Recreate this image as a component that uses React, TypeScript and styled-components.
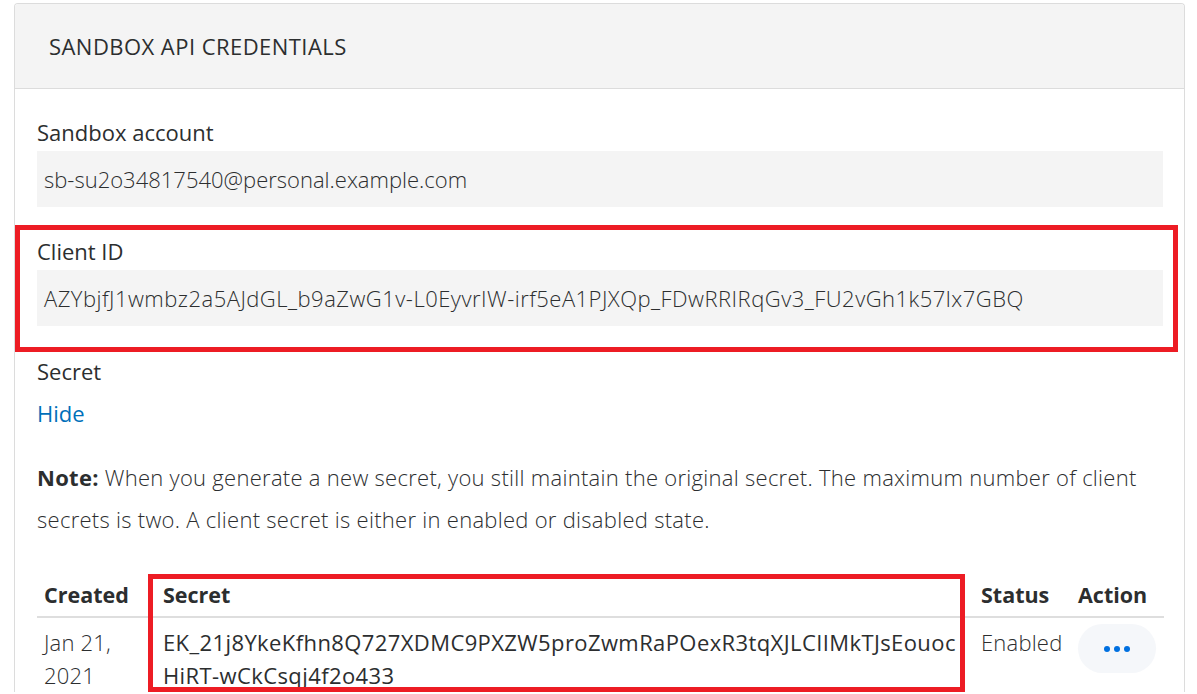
import React from 'react'
import styled, { createGlobalStyle } from 'styled-components'

const GlobalStyle = createGlobalStyle`
  html, body {
    margin: 0;
    padding: 0;
    background: #ffffff;
  }
  body {
    font-family: "Open Sans", "Noto Sans", Arial, sans-serif;
    color: #2c2e2f;
  }
`

const Page = styled.div`
  padding: 3px 12px 0 14px;
`

const Card = styled.section`
  border: 1px solid #dcdcdc;
  border-bottom: none;
  border-radius: 4px 4px 0 0;
  overflow: hidden;
`

const CardHeader = styled.header`
  height: 84px;
  display: flex;
  align-items: center;
  padding-left: 34px;
  background: #f4f4f4;
  border-bottom: 1px solid #dcdcdc;
  font-size: 22px;
  letter-spacing: 0.45px;
  color: #2c2e2f;
`

const CardBody = styled.div`
  padding: 29px 21px 0 22px;
  display: flex;
  flex-direction: column;
`

const Field = styled.div`
  display: flex;
  flex-direction: column;
`

const Highlight = styled.div`
  margin: 18px -15px 0 -22px;
  padding: 7px 10px 21px 17px;
  border: 5px solid #ed1c24;
`

const Label = styled.div`
  font-size: 22px;
  line-height: 28px;
  color: #2c2e2f;
  margin-bottom: 5px;
`

const ValueBox = styled.div<{ $spacing?: number }>`
  height: 56px;
  display: flex;
  align-items: center;
  padding-left: 7px;
  background: #f4f4f4;
  font-size: 22px;
  font-weight: 300;
  letter-spacing: ${(p) => p.$spacing ?? 0}px;
  color: #2c2e2f;
  white-space: nowrap;
`

const SecretField = styled(Field)`
  margin-top: 5px;
`

const LinkButton = styled.a`
  margin-top: 9px;
  font-size: 22px;
  line-height: 28px;
  color: #0070ba;
  text-decoration: none;
  cursor: pointer;
`

const Note = styled.p`
  margin: 29px 0 0;
  font-size: 22px;
  font-weight: 300;
  line-height: 42px;
  letter-spacing: 0.28px;
  color: #2c2e2f;

  strong {
    font-weight: 700;
  }
`

const Table = styled.div`
  margin-top: 37px;
  display: grid;
  grid-template-columns: 119px 809px 106px 93px;
  grid-template-rows: auto auto;
`

const HeadCell = styled.div<{ $col: number; $pad?: number }>`
  grid-column: ${(p) => p.$col};
  grid-row: 1;
  padding: 4px 7px 7px ${(p) => p.$pad ?? 7}px;
  font-size: 21.5px;
  font-weight: 700;
  line-height: 28px;
  border-bottom: 2px solid #dedede;
`

const Cell = styled.div<{ $col: number; $pad?: number }>`
  grid-column: ${(p) => p.$col};
  grid-row: 2;
  padding: 8px 7px 0 ${(p) => p.$pad ?? 7}px;
  font-size: 22px;
  font-weight: 300;
  line-height: 33px;
  letter-spacing: 0.2px;
`

const SecretCell = styled(Cell)`
  font-weight: 400;
  letter-spacing: 0.4px;
  word-break: break-all;
`

const ColumnMark = styled.div`
  grid-column: 2;
  grid-row: 1 / 3;
  margin: -3px 0 0 -8px;
  border: 5px solid #ed1c24;
  pointer-events: none;
`

const ActionButton = styled.button`
  width: 78px;
  height: 49px;
  margin-top: -2px;
  padding: 0;
  border: none;
  border-radius: 25px;
  background: #f5f7fa;
  display: flex;
  align-items: center;
  justify-content: center;
  gap: 4px;
  cursor: pointer;
`

const Dot = styled.span`
  width: 6px;
  height: 6px;
  border-radius: 50%;
  background: #0070e0;
`

const secret = 'EK_21j8YkeKfhn8Q727XDMC9PXZW5proZwmRaPOexR3tqXJLCIIMkTJsEouocHiRT-wCkCsqj4f2o433'

export default function App() {
  return (
    <>
      <GlobalStyle />
      <Page>
        <Card>
          <CardHeader>SANDBOX API CREDENTIALS</CardHeader>
          <CardBody>
            <Field>
              <Label>Sandbox account</Label>
              <ValueBox>sb-su2o34817540@personal.example.com</ValueBox>
            </Field>

            {/* client id, marked in red */}
            <Highlight>
              <Field>
                <Label>Client ID</Label>
                <ValueBox $spacing={0.48}>AZYbjfJ1wmbz2a5AJdGL_b9aZwG1v-L0EyvrIW-irf5eA1PJXQp_FDwRRIRqGv3_FU2vGh1k57lx7GBQ</ValueBox>
              </Field>
            </Highlight>

            <SecretField>
              <Label>Secret</Label>
              <LinkButton>Hide</LinkButton>
            </SecretField>

            <Note>
              <strong>Note:</strong> When you generate a new secret, you still maintain the original secret. The maximum number of client secrets is two. A client secret is either in enabled or disabled state.
            </Note>

            <Table>
              <HeadCell $col={1}>Created</HeadCell>
              <HeadCell $col={2}>Secret</HeadCell>
              <HeadCell $col={3} $pad={16}>Status</HeadCell>
              <HeadCell $col={4}>Action</HeadCell>
              <Cell $col={1}>Jan 21, 2021</Cell>
              <SecretCell $col={2}>{secret}</SecretCell>
              <Cell $col={3} $pad={16}>Enabled</Cell>
              <Cell $col={4}>
                <ActionButton aria-label="More actions">
                  <Dot />
                  <Dot />
                  <Dot />
                </ActionButton>
              </Cell>
              <ColumnMark />
            </Table>
          </CardBody>
        </Card>
      </Page>
    </>
  )
}
